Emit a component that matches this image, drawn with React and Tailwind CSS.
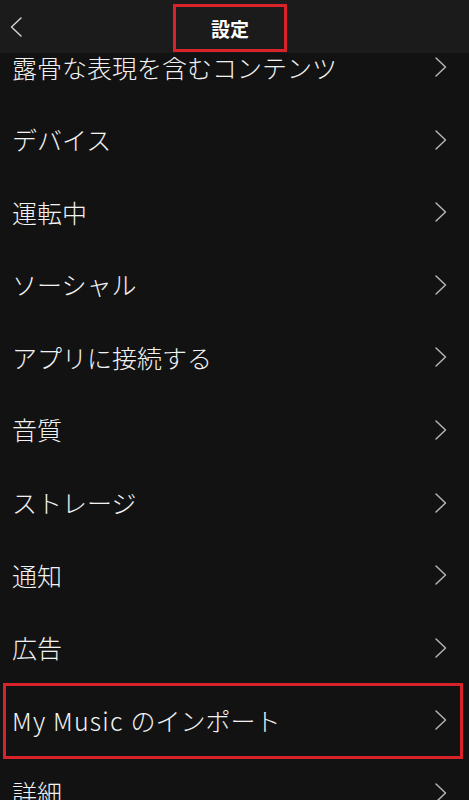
import React from 'react';

const items = [
    '露骨な表現を含むコンテンツ',
    'デバイス',
    '運転中',
    'ソーシャル',
    'アプリに接続する',
    '音質',
    'ストレージ',
    '通知',
    '広告',
    'My Music のインポート',
    '詳細',
];

const Chevron = () => (
    <svg width="14" height="22" viewBox="0 0 14 22" className="shrink-0">
        <path d="M2 2 L11.5 11 L2 20" fill="none" stroke="#b3b3b3" strokeWidth="1.5" strokeLinecap="round" strokeLinejoin="round" />
    </svg>
);

const Label = ({ text }) => {
    // Latin part is set a bit wider, like the app's own font
    if (text.startsWith('My Music')) {
        return (
            <>
                <span className="tracking-[1.2px]">My Music </span>
                {text.slice(9)}
            </>
        );
    }
    return text;
};

const Row = ({ label, highlight }) => (
    <div className="relative flex items-center justify-between h-[72.6px] pl-[12px] pr-[21px]">
        <span className="text-[25px] leading-none font-light text-[#f2f2f2] whitespace-nowrap">
            <Label text={label} />
        </span>
        <Chevron />
        {/* 赤枠 (注釈) */}
        {highlight && (
            <div className="absolute left-[3px] right-[6px] top-[-1px] bottom-[-2px] border-[3px] border-[#d8232a]" />
        )}
    </div>
);

export default function App() {
    return (
        <div className="h-[800px] overflow-hidden bg-[#121212] font-['Noto_Sans_CJK_JP','Noto_Sans',sans-serif]">
            {/* Header */}
            <div className="flex items-start h-[53px] bg-[#1b1b1b]">
                <svg width="14" height="22" viewBox="0 0 14 22" className="ml-[9px] mt-[16px] shrink-0">
                    <path d="M12 2 L2.5 11 L12 20" fill="none" stroke="#d0d0d0" strokeWidth="1.5" strokeLinecap="round" strokeLinejoin="round" />
                </svg>
                <div className="ml-[150px] mt-[4px] w-[114px] h-[48px] border-[3px] border-[#d8232a] flex items-center justify-center">
                    <span className="text-[19px] font-bold text-white leading-none">設定</span>
                </div>
            </div>

            {/* List: first row partly hidden under the header */}
            <div className="h-[50.3px] overflow-hidden">
                <div className="-mt-[22.3px]">
                    <Row label={items[0]} />
                </div>
            </div>
            {items.slice(1).map((label, i) => (
                <Row key={i} label={label} highlight={label.startsWith('My Music')} />
            ))}
        </div>
    );
}
